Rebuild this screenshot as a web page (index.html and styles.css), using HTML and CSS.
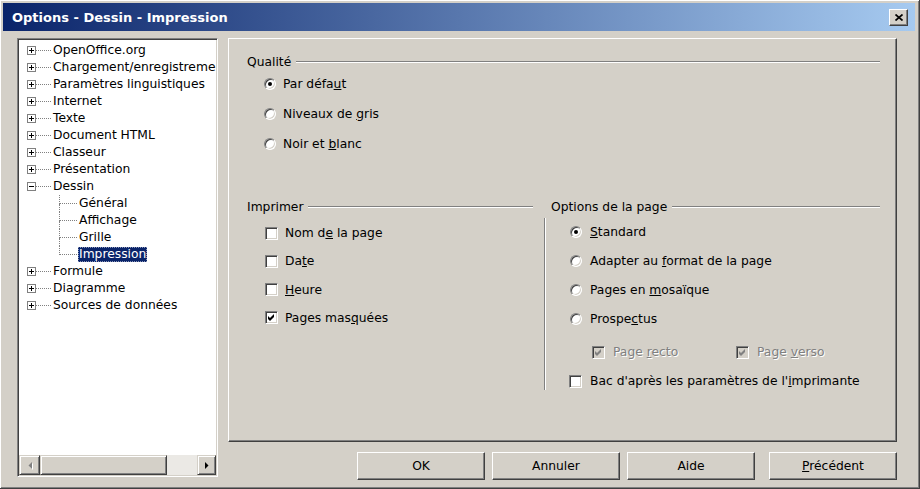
FILE: index.html
```html
<!DOCTYPE html>
<html lang="fr">
<head>
    <meta charset="UTF-8">
    <title>Options - Dessin - Impression</title>
    <link rel="stylesheet" href="styles.css">
</head>
<body>

<div class="window">
    <div class="titlebar">
        <span class="title">Options - Dessin - Impression</span>
        <span class="close">
            <svg width="8" height="7" viewBox="0 0 8 7"><path d="M0.5 0.5 L7.5 6.5 M7.5 0.5 L0.5 6.5" stroke="#000" stroke-width="1.7" fill="none"/></svg>
        </span>
    </div>

    <div class="client">
        <!-- Arborescence des options -->
        <div class="tree">
            <ul class="tree-list">
                <li class="node"><span class="expander"></span><span class="branch"></span><span class="label">OpenOffice.org</span></li>
                <li class="node"><span class="expander"></span><span class="branch"></span><span class="label">Chargement/enregistreme</span></li>
                <li class="node"><span class="expander"></span><span class="branch"></span><span class="label">Paramètres linguistiques</span></li>
                <li class="node"><span class="expander"></span><span class="branch"></span><span class="label">Internet</span></li>
                <li class="node"><span class="expander"></span><span class="branch"></span><span class="label">Texte</span></li>
                <li class="node"><span class="expander"></span><span class="branch"></span><span class="label">Document HTML</span></li>
                <li class="node"><span class="expander"></span><span class="branch"></span><span class="label">Classeur</span></li>
                <li class="node"><span class="expander"></span><span class="branch"></span><span class="label">Présentation</span></li>
                <li class="node"><span class="expander open"></span><span class="branch"></span><span class="label">Dessin</span></li>
                <li class="child"><span class="elbow"><span class="up"></span><span class="down"></span></span><span class="label">Général</span></li>
                <li class="child"><span class="elbow"><span class="up"></span><span class="down"></span></span><span class="label">Affichage</span></li>
                <li class="child"><span class="elbow"><span class="up"></span><span class="down"></span></span><span class="label">Grille</span></li>
                <li class="child last"><span class="elbow"><span class="up"></span><span class="down"></span></span><span class="label selected">Impression</span></li>
                <li class="node"><span class="expander"></span><span class="branch"></span><span class="label">Formule</span></li>
                <li class="node"><span class="expander"></span><span class="branch"></span><span class="label">Diagramme</span></li>
                <li class="node"><span class="expander"></span><span class="branch"></span><span class="label">Sources de données</span></li>
            </ul>
            <div class="hscroll">
                <span class="sb-btn left">
                    <svg width="4" height="7" viewBox="0 0 4 7"><path d="M4 0 L0.5 3.5 L4 7 Z" fill="#808080"/></svg>
                </span>
                <span class="sb-thumb"></span>
                <span class="sb-track"></span>
                <span class="sb-btn right">
                    <svg width="4" height="7" viewBox="0 0 4 7"><path d="M0 0 L3.5 3.5 L0 7 Z" fill="#000"/></svg>
                </span>
            </div>
        </div>

        <div class="main">
            <div class="page">
                <div class="legend"><span>Qualité</span></div>
                <div class="opts quality">
                    <div class="choice"><span class="radio"><span class="dot"></span></span><span>Par défa<u>u</u>t</span></div>
                    <div class="choice"><span class="radio"></span><span>Niveaux de <u>g</u>ris</span></div>
                    <div class="choice"><span class="radio"></span><span>Noir et <u>b</u>lanc</span></div>
                </div>

                <div class="row2">
                    <div class="col-print">
                        <div class="legend"><span>Imprimer</span></div>
                        <div class="opts print">
                            <div class="choice"><span class="check"></span><span>Nom d<u>e</u> la page</span></div>
                            <div class="choice"><span class="check"></span><span>Da<u>t</u>e</span></div>
                            <div class="choice"><span class="check"></span><span><u>H</u>eure</span></div>
                            <div class="choice"><span class="check"><svg width="9" height="9" viewBox="0 0 9 9"><path d="M1 3 L3 5 L7 1 L7 4 L3 8 L1 6 Z" fill="#000"/></svg></span><span>Pages mas<u>q</u>uées</span></div>
                        </div>
                    </div>
                    <div class="col-page">
                        <div class="legend"><span>Options de la page</span></div>
                        <div class="page-opts">
                            <div class="choice"><span class="radio"><span class="dot"></span></span><span><u>S</u>tandard</span></div>
                            <div class="choice"><span class="radio"></span><span>Adapter au <u>f</u>ormat de la page</span></div>
                            <div class="choice"><span class="radio"></span><span>Pages en <u>m</u>osaïque</span></div>
                            <div class="choice"><span class="radio"></span><span>Prospe<u>c</u>tus</span></div>
                            <div class="choice sub">
                                <span class="sub-item disabled"><span class="check"><svg width="9" height="9" viewBox="0 0 9 9"><path d="M1 3 L3 5 L7 1 L7 4 L3 8 L1 6 Z" fill="#808080"/></svg></span><span>Page <u>r</u>ecto</span></span>
                                <span class="sub-item disabled"><span class="check"><svg width="9" height="9" viewBox="0 0 9 9"><path d="M1 3 L3 5 L7 1 L7 4 L3 8 L1 6 Z" fill="#808080"/></svg></span><span>Page <u>v</u>erso</span></span>
                            </div>
                            <div class="choice tray"><span class="check"></span><span>Bac d'après les paramètres de l'<u>i</u>mprimante</span></div>
                        </div>
                    </div>
                </div>
            </div>

            <div class="buttons">
                <button class="btn">OK</button>
                <button class="btn">Annuler</button>
                <button class="btn">Aide</button>
                <button class="btn back"><u>P</u>récédent</button>
            </div>
        </div>
    </div>
</div>

</body>
</html>
```

FILE: styles.css
```css
body {
    margin: 0;
    background-color: #d4d0c8;
    font-family: "DejaVu Sans", Verdana, sans-serif;
    font-size: 12.3px;
    color: #000;
}

.window {
    box-sizing: border-box;
    width: 920px;
    height: 489px;
    display: flex;
    flex-direction: column;
    padding: 3px 4px 3px 3px;
    border-right: 1px solid #404040;
    border-bottom: 1px solid #404040;
    box-shadow: inset 1px 1px #fff, inset -1px -1px #808080;
    background-color: #d4d0c8;
}

/* Barre de titre */
.titlebar {
    height: 28px;
    flex-shrink: 0;
    display: flex;
    align-items: center;
    padding: 0 7px 0 9px;
    background: linear-gradient(to right, #0a246a, #a6caf0);
}

.title {
    flex: 1;
    color: #fff;
    font-weight: bold;
    font-size: 13px;
}

.close {
    box-sizing: border-box;
    width: 19px;
    height: 17px;
    display: flex;
    align-items: center;
    justify-content: center;
    background-color: #d4d0c8;
    border: 1px solid;
    border-color: #fff #404040 #404040 #fff;
    box-shadow: inset -1px -1px #808080;
}

.client {
    flex: 1;
    display: flex;
    align-items: flex-start;
    gap: 10px;
    padding: 7px 18px 5px 14px;
}

/* Arborescence */
.tree {
    box-sizing: border-box;
    width: 201px;
    height: 439px;
    display: flex;
    flex-direction: column;
    padding: 1px;
    background-color: #fff;
    border: 1px solid;
    border-color: #808080 #fff #fff #808080;
    box-shadow: inset 1px 1px #404040, inset -1px -1px #d4d0c8;
}

.tree-list {
    flex: 1;
    list-style: none;
    margin: 0;
    padding: 2px 0 0 0;
    overflow: hidden;
}

.tree-list li {
    height: 17px;
    display: flex;
    align-items: center;
    white-space: nowrap;
}

.expander {
    box-sizing: border-box;
    width: 9px;
    height: 9px;
    flex-shrink: 0;
    margin-left: 8px;
    border: 1px solid #808080;
    background:
        linear-gradient(#000, #000) center / 5px 1px no-repeat,
        linear-gradient(#000, #000) center / 1px 5px no-repeat,
        #fff;
}

.expander.open {
    background:
        linear-gradient(#000, #000) center / 5px 1px no-repeat,
        #fff;
}

.branch {
    width: 15px;
    flex-shrink: 0;
    border-top: 1px dotted #808080;
}

.label {
    margin-left: 1px;
    padding: 0 1px;
    line-height: 15px;
}

.child {
    padding-left: 40px;
}

.elbow {
    width: 18px;
    flex-shrink: 0;
    align-self: stretch;
    display: flex;
    flex-direction: column;
}

.elbow .up {
    flex: 1;
    border-left: 1px dotted #808080;
    border-bottom: 1px dotted #808080;
}

.elbow .down {
    flex: 1;
    border-left: 1px dotted #808080;
}

.child.last .down {
    border-left: none;
}

.label.selected {
    background-color: #0a246a;
    color: #fff;
    outline: 1px dotted #8d97b8;
    outline-offset: -1px;
}

/* Barre de défilement horizontale */
.hscroll {
    height: 20px;
    display: flex;
    flex-shrink: 0;
}

.sb-btn, .sb-thumb {
    box-sizing: border-box;
    display: flex;
    align-items: center;
    justify-content: center;
    background-color: #d4d0c8;
    border: 1px solid;
    border-color: #d4d0c8 #404040 #404040 #d4d0c8;
    box-shadow: inset 1px 1px #fff, inset -1px -1px #808080;
}

.sb-btn.left {
    width: 21px;
}

.sb-btn.left svg {
    filter: drop-shadow(1px 1px 0 #fff);
}

.sb-btn.right {
    width: 19px;
}

.sb-thumb {
    width: 127px;
}

.sb-track {
    flex: 1;
    background-color: #ebe9e5;
}

/* Page d'options */
.main {
    width: 669px;
    height: 442px;
    display: flex;
    flex-direction: column;
    gap: 10px;
}

.page {
    box-sizing: border-box;
    height: 404px;
    padding: 15px 16px 0 18px;
    border: 1px solid;
    border-color: #fff #404040 #404040 #fff;
    box-shadow: inset -1px -1px #808080;
}

.legend {
    height: 16px;
    line-height: 16px;
    display: flex;
    align-items: center;
    white-space: nowrap;
}

.legend::after {
    content: "";
    flex: 1;
    margin-left: 5px;
    border-top: 1px solid #808080;
    border-bottom: 1px solid #fff;
}

.opts {
    display: flex;
    flex-direction: column;
}

.quality {
    margin-top: 6px;
    padding-left: 17px;
    gap: 14px;
}

.choice {
    height: 16px;
    display: flex;
    align-items: center;
    white-space: nowrap;
}

.radio {
    box-sizing: border-box;
    width: 12px;
    height: 12px;
    flex-shrink: 0;
    margin-right: 7px;
    display: flex;
    align-items: center;
    justify-content: center;
    border-radius: 50%;
    border: 1px solid;
    border-color: #808080 #fff #fff #808080;
    box-shadow: inset 1px 1px #404040, inset -1px -1px #d4d0c8;
    background-color: #fff;
}

.dot {
    width: 4px;
    height: 4px;
    border-radius: 50%;
    background-color: #000;
}

.check {
    box-sizing: border-box;
    width: 13px;
    height: 13px;
    flex-shrink: 0;
    margin-right: 7px;
    display: flex;
    align-items: center;
    justify-content: center;
    border: 1px solid;
    border-color: #808080 #fff #fff #808080;
    box-shadow: inset 1px 1px #404040, inset -1px -1px #d4d0c8;
    background-color: #fff;
}

.row2 {
    display: flex;
    margin-top: 47px;
}

.col-print {
    width: 298px;
    margin-right: 11px;
}

.print {
    margin-top: 10px;
    padding-left: 18px;
    gap: 12.3px;
}

.col-page {
    flex: 1;
}

.col-page .legend {
    padding-left: 7px;
}

.page-opts {
    box-sizing: border-box;
    height: 172px;
    margin-top: 3px;
    padding: 6px 0 0 25px;
    display: flex;
    flex-direction: column;
    gap: 13px;
    border-left: 1px solid #808080;
    box-shadow: inset 1px 0 #fff;
}

.page-opts .radio {
    margin-right: 8px;
}

.choice.sub {
    margin-top: 4px;
    padding-left: 22px;
}

.sub-item {
    width: 144px;
    display: flex;
    align-items: center;
}

.sub-item .check {
    margin-right: 8px;
}

.disabled {
    color: #808080;
    text-shadow: 1px 1px 0 #fff;
}

.disabled .check {
    background-color: #d4d0c8;
}

.tray {
    margin-left: -1px;
}

.tray .check {
    margin-right: 8px;
}

/* Boutons du bas */
.buttons {
    height: 28px;
    display: flex;
    justify-content: flex-end;
}

.btn {
    box-sizing: border-box;
    width: 128px;
    height: 28px;
    margin-left: 7px;
    padding: 0;
    font-family: "DejaVu Sans", Verdana, sans-serif;
    font-size: 12.3px;
    color: #000;
    background-color: #d4d0c8;
    border: 1px solid;
    border-color: #fff #404040 #404040 #fff;
    box-shadow: inset -1px -1px #808080;
}

.btn.back {
    margin-left: 14px;
}
```
